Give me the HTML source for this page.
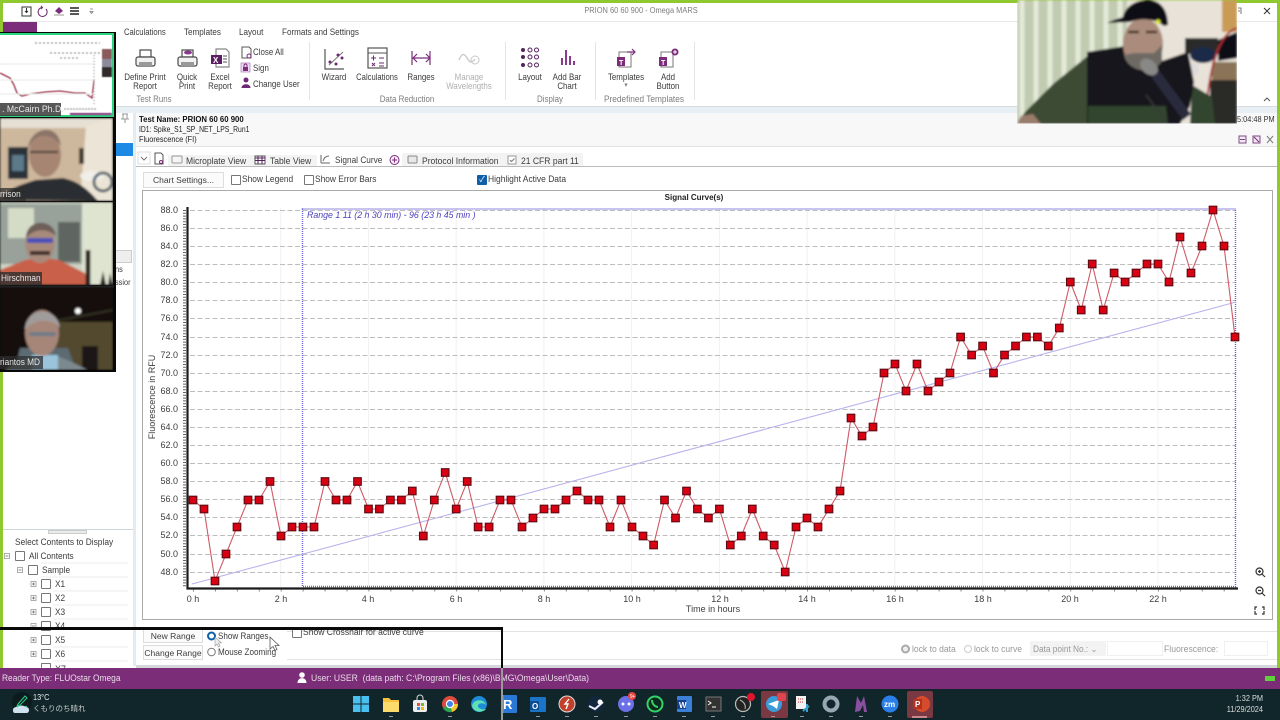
<!DOCTYPE html>
<html><head><meta charset="utf-8">
<style>
html,body{margin:0;padding:0;background:#fff;overflow:hidden}
#p{--s:.92;position:relative;width:1280px;height:720px;overflow:hidden;background:#fff;font-family:"Liberation Sans","Noto Sans CJK JP",sans-serif;font-size:9px;color:#3c3c3c;filter:blur(.3px)}
.a{position:absolute}
.t{position:absolute;white-space:nowrap;line-height:10px;transform-origin:0 50%;transform:translateY(-5px) scaleX(var(--s))}
.c{position:absolute;white-space:nowrap;line-height:10px;transform:translate(-50%,-5px) scaleX(var(--s));text-align:center}
.r{position:absolute;white-space:nowrap;line-height:10px;transform-origin:100% 50%;transform:translate(-100%,-5px) scaleX(var(--s));text-align:right}
.k{--s:1}.rb{--s:.88}
.g{color:#7d7d7d}.l{color:#b0b0b0}
.cb{position:absolute;width:8px;height:8px;border:1px solid #777;background:#fff;border-radius:1px}
.btn{position:absolute;background:#fbfbfb;border:1px solid #ddd;text-align:center;color:#3c3c3c;line-height:14px;box-sizing:border-box;white-space:nowrap;overflow:hidden;font-size:8.500px}
svg{position:absolute;left:0;top:0}
</style></head><body><div id="p">

<!-- frame and backgrounds -->
<div class="a" style="left:0;top:0;width:1280px;height:3px;background:#8fc92f"></div>
<div class="a" style="left:0;top:0;width:3px;height:689px;background:#8fc92f"></div>
<div class="a" style="left:1277px;top:0;width:3px;height:689px;background:#8fc92f"></div>
<div class="a" style="left:3px;top:21px;width:1274px;height:1px;background:#e8e8e8"></div>
<div class="a" style="left:3px;top:22px;width:34px;height:12px;background:#7b2d7b"></div>
<div class="a" style="left:3px;top:106px;width:1274px;height:7px;background:#e9f0f5;border-top:1px solid #d8dde0;box-sizing:border-box"></div>
<div class="a" style="left:133px;top:113px;width:1144px;height:33px;background:#f8f8f8;border-bottom:1px solid #e3e3e3"></div>
<div class="a" style="left:133px;top:113px;width:3px;height:553px;background:#e4ebf0"></div>
<div class="a" style="left:115px;top:143px;width:18px;height:13px;background:#1e88e5"></div>
<div class="a" style="left:115px;top:250px;width:17px;height:13px;background:#eee;border:1px solid #ccc;box-sizing:border-box"></div>
<div class="a" style="left:3px;top:529px;width:130px;height:1px;background:#cfd6da"></div>
<div class="a" style="left:48px;top:530px;width:39px;height:4px;background:#eaeaea;border:1px solid #ccc;box-sizing:border-box"></div>
<div class="a" style="left:136px;top:166px;width:1141px;height:1px;background:#bbb"></div>
<div class="a" style="left:142px;top:190px;width:1131px;height:430px;border:1px solid #aaa;box-sizing:border-box;background:#fff"></div>
<div class="a" style="left:287px;top:631px;width:990px;height:1px;background:#e2e2e2"></div>
<div class="a" style="left:287px;top:659px;width:990px;height:1px;background:#e2e2e2"></div>
<div class="a" style="left:136px;top:665px;width:1141px;height:3px;background:#d5d8da"></div>
<div class="a" style="left:0;top:668px;width:1280px;height:21px;background:#7b2d77"></div>
<div class="a" style="left:0;top:689px;width:1280px;height:31px;background:#10262a"></div>
<div class="a" style="left:1265px;top:676px;width:10px;height:5px;background:#5fd13c"></div>

<!-- ribbon group separators -->
<div class="a" style="left:309px;top:42px;width:1px;height:58px;background:#e4e4e4"></div>
<div class="a" style="left:505px;top:42px;width:1px;height:58px;background:#e4e4e4"></div>
<div class="a" style="left:595px;top:42px;width:1px;height:58px;background:#e4e4e4"></div>
<div class="a" style="left:694px;top:42px;width:1px;height:58px;background:#e4e4e4"></div>

<!-- icons & chart SVG -->
<svg width="1280" height="720" viewBox="0 0 1280 720">
<defs>
<marker id="m" markerUnits="userSpaceOnUse" markerWidth="11" markerHeight="11" refX="5.500" refY="5.500" viewBox="0 0 11 11"><rect x="1.700" y="1.700" width="7.600" height="7.600" fill="#d90012" stroke="#5a0a12" stroke-width="1.100"/></marker>
</defs>

<!-- QAT -->
<g fill="none" stroke="#333" stroke-width="1">
<rect x="22" y="7" width="9" height="9"/><path d="M26.500 8v4M25 11l1.500 1.500L28 11"/>
<path d="M46 9a4.500 4.500 0 1 1-4-1.500" stroke="#6d2a72"/><path d="M41 6l1.500 1.500L41 9" stroke="#6d2a72"/>
<path d="M55 11l4-4 4 4-4 3z" fill="#7b2d7b" stroke="none"/><path d="M54 15h10" stroke="#999"/>
<path d="M70 8h9M70 11h9M70 14h9" stroke="#222" stroke-width="1.600"/>
<path d="M90 11.500h3l-1.500 2z M90 9h3" stroke="#777" stroke-width=".8"/>
</g>
<!-- window buttons -->
<path d="M1264 8l6 6M1270 8l-6 6" stroke="#333" stroke-width="1" fill="none"/>
<path d="M1238 8h3v6M1238 11h2" stroke="#555" stroke-width=".8" fill="none"/>
<path d="M1264 101l3-3 3 3" stroke="#555" fill="none"/>

<!-- ribbon icons -->
<g fill="none" stroke="#4a4a4a" stroke-width="1.200">
<rect x="140" y="50" width="11" height="7" fill="#fff"/><rect x="136" y="57" width="19" height="9" rx="2" fill="#f2f2f2"/><rect x="139" y="62" width="13" height="4" fill="#999" stroke="none"/>
<rect x="182" y="50" width="11" height="7" fill="#fff"/><rect x="178" y="57" width="19" height="9" rx="2" fill="#f2f2f2"/><rect x="181" y="62" width="13" height="4" fill="#999" stroke="none"/><ellipse cx="188" cy="52.500" rx="4" ry="2" fill="#8a3b90" stroke="none"/>
<path d="M216 49h10l3 3v15h-13z" fill="#fff" stroke="#888"/>
</g>
<rect x="211" y="55" width="11" height="9" fill="#5b1e63"/><text x="213" y="63" font-size="8" font-weight="bold" fill="#fff" font-family="Liberation Sans">X</text>
<path d="M223 56h4M223 59h4M223 62h4" stroke="#555" fill="none"/>
<path d="M242 47h7l2 2v9h-9z" fill="#fff" stroke="#555"/><circle cx="249" cy="56" r="2" fill="#fff" stroke="#7b2d7b"/>
<rect x="241" y="63" width="9" height="9" fill="#efdcf1" stroke="#b07ab8" stroke-width=".7"/><rect x="243" y="67" width="5" height="4" fill="#7b2d7b"/><path d="M244 67v-1.500a1.500 1.500 0 0 1 3 0V67" fill="none" stroke="#7b2d7b"/>
<circle cx="246" cy="80" r="2.500" fill="#6d2a72"/><path d="M241.500 88c0-5 9-5 9 0z" fill="#6d2a72"/>
<path d="M325 49v20h19" fill="none" stroke="#555" stroke-width="1.200"/><path d="M329 65l14-13" stroke="#777" stroke-width="1" fill="none"/><g fill="#6d2a72"><circle cx="330" cy="62" r="1.500"/><circle cx="336" cy="64" r="1.500"/><circle cx="338" cy="55" r="1.500"/><circle cx="342" cy="58" r="1.500"/></g>
<rect x="368" y="48" width="19" height="20" fill="#fff" stroke="#555" stroke-width="1.200"/><path d="M368 53h19" stroke="#555"/><path d="M371 58h5M373.500 55.500v5M379 58h5M372 63l3 3M375 63l-3 3M379 63h5M379 66h5" stroke="#6d2a72" fill="none"/>
<path d="M413 58h17M417 54l-4 4 4 4M426 54l4 4-4 4M412 51v14M430 51v14" stroke="#7b2d7b" stroke-width="1.200" fill="none"/>
<path d="M459 60c3-7 5-7 8-2s5 5 8 1" stroke="#c9c9c9" stroke-width="1.400" fill="none"/><circle cx="475" cy="60" r="4" fill="none" stroke="#c9c9c9"/>
<g><circle cx="523" cy="50" r="2" fill="#54245c"/><circle cx="530" cy="50" r="2" fill="none" stroke="#54245c"/><circle cx="536.500" cy="50" r="2" fill="none" stroke="#54245c"/><circle cx="523" cy="57" r="2" fill="#54245c"/><circle cx="530" cy="57" r="2" fill="none" stroke="#54245c"/><circle cx="536.500" cy="57" r="2" fill="none" stroke="#54245c"/><circle cx="523" cy="65" r="2" fill="#54245c"/><circle cx="530" cy="65" r="2" fill="none" stroke="#54245c"/><circle cx="536.500" cy="65" r="2" fill="none" stroke="#54245c"/></g>
<g fill="#8a3b90"><rect x="561" y="58" width="2" height="7"/><rect x="565" y="50" width="2" height="15"/><rect x="569" y="56" width="2" height="9"/><rect x="573" y="61" width="2" height="4"/></g>
<path d="M619 52h12v15h-12z" fill="#fff" stroke="#777"/><rect x="617" y="57" width="8" height="9" fill="#7b2d7b"/><text x="619" y="65" font-size="7" font-weight="bold" fill="#fff" font-family="Liberation Sans">T</text><path d="M627 52h8M632 49l3 3-3 3" stroke="#7b2d7b" fill="none" stroke-width="1.200"/>
<path d="M661 52h12v15h-12z" fill="#fff" stroke="#777"/><rect x="659" y="57" width="8" height="9" fill="#7b2d7b"/><text x="661" y="65" font-size="7" font-weight="bold" fill="#fff" font-family="Liberation Sans">T</text><circle cx="675" cy="52" r="3.500" fill="#7b2d7b"/><path d="M673 52h4M675 50v4" stroke="#fff"/>

<!-- pin -->
<path d="M122 114h6M123 114v5h4v-5M121 119h8M125 119v4" stroke="#999" fill="none"/>
<!-- header right icons -->
<rect x="1239" y="136" width="7" height="7" fill="#f2e9f3" stroke="#7b4a80"/><path d="M1240 139.500h5" stroke="#7b4a80"/>
<rect x="1253" y="136" width="7" height="7" fill="#f2e9f3" stroke="#7b4a80"/><path d="M1254 137l5 5" stroke="#7b2d7b"/>
<path d="M1267 136l6 7M1273 136l-6 7" stroke="#777" fill="none"/>

<!-- tab strip -->
<rect x="138" y="152" width="12" height="12" fill="#fff" stroke="#ddd"/><path d="M141 157l3 3 3-3" stroke="#777" fill="none"/>
<path d="M155 153h6l2 2v9h-8z" fill="#fff" stroke="#555"/><circle cx="161" cy="162" r="1.500" fill="#fff" stroke="#7b2d7b"/>
<rect x="168" y="155" width="149" height="11" fill="#f3f3f3"/>
<rect x="172" y="156" width="10" height="7" rx="1" fill="#f5f5f5" stroke="#999"/>
<rect x="255" y="156" width="10" height="8" fill="#fff" stroke="#555"/><path d="M255 158h10M255 160.500h10M258 156v8M262 156v8" stroke="#54245c"/>
<path d="M321 163v-8M321 163h9M323 161c1-3 3-5 6-5" stroke="#666" fill="none"/>
<circle cx="394.500" cy="160" r="4.500" fill="#f6eef7" stroke="#7b2d7b"/><path d="M392 160h5M394.500 157.500v5" stroke="#7b2d7b"/>
<rect x="402" y="153" width="181" height="13" fill="#f3f3f3"/>
<rect x="408" y="156" width="9" height="7" rx="1" fill="#e8e8e8" stroke="#888"/>
<rect x="508" y="156" width="8" height="8" fill="#fff" stroke="#999"/><path d="M510 160l1.500 1.500 3-3" stroke="#777" fill="none"/>

<!-- chart gridlines -->
<g stroke="#f1f1f1" stroke-width="1">
<path d="M280.700 208V587M368.500 208V587M456.200 208V587M543.900 208V587M631.600 208V587M719.400 208V587M807.100 208V587M894.800 208V587M982.500 208V587M1070.300 208V587M1158 208V587"/>
</g>
<g stroke="#bdbdbd" stroke-width="1" stroke-dasharray="5 2.500" fill="none">
<path d="M190 210.500H1236M190 228.500H1236M190 246.500H1236M190 264.500H1236M190 282.500H1236M190 300.500H1236M190 318.500H1236M190 337.500H1236M190 355.500H1236M190 373.500H1236M190 391.500H1236M190 409.500H1236M190 427.500H1236M190 445.500H1236M190 463.500H1236M190 481.500H1236M190 499.500H1236M190 517.500H1236M190 535.500H1236M190 554.500H1236M190 572.500H1236"/>
</g>
<!-- range box -->
<path d="M302.500 209H1235.500V586.500H302.500Z" fill="none" stroke="#6a62d8" stroke-width="1.400" stroke-dasharray="1 1"/>
<!-- regression -->
<path d="M192 584L1236 302" stroke="#b8b3ec" stroke-width="1.100" fill="none"/>
<!-- axes -->
<path d="M187.500 207V588.500H1238" stroke="#1b1b1b" stroke-width="2.200" fill="none"/>
<path d="M184.500 210V588" stroke="#666" stroke-width="3" stroke-dasharray="1 1.800" fill="none"/>
<path d="M193 590.500H1238" stroke="#888" stroke-width="2" stroke-dasharray="1 20.930" fill="none"/>
<!-- data -->
<polyline fill="none" stroke="#cf5a66" stroke-width="1.100" marker-start="url(#m)" marker-mid="url(#m)" marker-end="url(#m)" points="193,500 204,509 215,581 226,554 237,527 248,500 259,500 270,481.500 281,536 292,527 303,527 314,527 325,481.500 336,500 347,500 357.500,481.500 368.500,509 379.400,509 390.400,500 401.400,500 412.300,491 423.300,536 434.300,500 445.200,472.500 456.200,509 467.200,481.500 478.100,527 489.100,527 500,500 511,500 522,527 533,518 544,509 555,509 566,500 577,491 588,500 599,500 610,527 621,500 632,527 643,536 653.600,545 664.500,500 675.500,518 686.500,491 697.400,509 708.400,518 719.400,509 730.300,545 741.300,536 752.300,509 763.200,536 774.200,545 785.200,572 796,527 807,518 818,527 829,509 840,491 851,418 862,436 873,427 884,373 895,364 906,391 917,364 928,391 939,382 950,373 960.600,337 971.600,355 982.600,346 993.500,373 1004.500,355 1015.500,346 1026.400,337 1037.400,337 1048.300,346 1059.300,328 1070.300,282 1081.200,310 1092.200,264 1103.200,310 1114.100,273 1125.100,282 1136,273 1147,264 1158,264 1169,282 1180,237 1191,273 1202,246 1213,210 1224,246 1235,337"/>

<!-- zoom icons -->
<g fill="none" stroke="#333" stroke-width="1.200">
<circle cx="1259.500" cy="571.500" r="3.500"/><path d="M1262 574l3 3M1258 571.500h3M1259.500 570v3"/>
<circle cx="1259.500" cy="590.500" r="3.500"/><path d="M1262 593l3 3M1258 590.500h3"/>
<path d="M1257 607h-2v3M1262 607h2v3M1257 614h-2v-3M1262 614h2v-3"/>
</g>

<!-- tree icons -->
<g fill="#fff" stroke="#999" stroke-width=".8">
<rect x="4.500" y="553.500" width="5" height="5"/><rect x="17.500" y="567.500" width="5" height="5"/>
<rect x="31" y="581.500" width="5" height="5"/><rect x="31" y="595.500" width="5" height="5"/><rect x="31" y="609.500" width="5" height="5"/><rect x="31" y="623.500" width="5" height="5"/><rect x="31" y="637.500" width="5" height="5"/><rect x="31" y="651.500" width="5" height="5"/>
</g>
<g stroke="#666" stroke-width=".7">
<path d="M5.500 556h3M18.500 570h3M32 584h3M33.500 582.500v3M32 598h3M33.500 596.500v3M32 612h3M33.500 610.500v3M32 626h3M32 640h3M33.500 638.500v3M32 654h3M33.500 652.500v3"/>
</g>
<g stroke="#eee"><path d="M41 563H128M41 577H128M53 591H128M53 605H128M53 619H128M53 647H128M53 661H128"/></g>

<!-- radios -->
<circle cx="211.500" cy="636" r="3.500" fill="#fff" stroke="#0c5fa8" stroke-width="2"/>
<circle cx="211.500" cy="652" r="3.800" fill="#fff" stroke="#777"/>
<circle cx="905.500" cy="649" r="3.500" fill="#eee" stroke="#aaa" stroke-width="2"/>
<circle cx="968" cy="649" r="3.500" fill="#fff" stroke="#ccc"/>
<!-- user icon in status -->
<circle cx="302" cy="675" r="2.800" fill="#fff"/><path d="M297.500 683c0-6.500 9-6.500 9 0z" fill="#fff"/>

<!-- taskbar icons -->
<g>
<path d="M353 696h7.500v7.500H353zM361.500 696h7.500v7.500h-7.500zM353 704.500h7.500v7.500H353zM361.500 704.500h7.500v7.500h-7.500z" fill="#49c0f0"/>
<path d="M383 698h6l2 2h8v12h-16z" fill="#f5c33b"/><rect x="383" y="702" width="16" height="10" fill="#fbdb6c"/>
<rect x="413" y="700" width="14" height="12" rx="2" fill="#eee"/><path d="M417 700v-2a3 3 0 0 1 6 0v2" fill="none" stroke="#ddd"/><rect x="417" y="703" width="3" height="3" fill="#e8502e"/><rect x="421" y="703" width="3" height="3" fill="#7ab830"/><rect x="417" y="707" width="3" height="3" fill="#2d8be0"/><rect x="421" y="707" width="3" height="3" fill="#f5b90a"/>
<circle cx="450" cy="704" r="8" fill="#dd4b3c"/><path d="M450 704L443 708A8 8 0 0 0 452 712Z" fill="#2fa44f"/><path d="M450 704L458 704A8 8 0 0 1 452 712Z" fill="#f7c52e"/><circle cx="450" cy="704" r="3.600" fill="#3f86ea" stroke="#fff" stroke-width="1.200"/>
<circle cx="479" cy="704" r="8" fill="#1d8bd6"/><path d="M472 706c1-7 12-8 14-1-3-3-8-2-8 1 0 3 5 4 8 3-3 4-12 4-14-3z" fill="#5fe0b4"/>
<rect x="501" y="695" width="16" height="18" rx="1" fill="#2a78d6"/><text x="503" y="709" font-size="13" font-weight="bold" fill="#fff" font-family="Liberation Sans">R</text>
<path d="M503 695v18" stroke="#b57b44" stroke-width="1.500"/>
<rect x="530" y="697" width="16" height="15" rx="1" fill="#1a74c8"/><rect x="530" y="701" width="9" height="9" fill="#0b4c94"/><text x="532" y="709" font-size="8" font-weight="bold" fill="#fff" font-family="Liberation Sans">O</text>
<circle cx="567" cy="704" r="8" fill="#c23f2c" stroke="#ddd" stroke-width="1"/><path d="M569 699l-4 5h3l-2 5" stroke="#fff" fill="none" stroke-width="1.400"/>
<circle cx="596" cy="704" r="8" fill="#12263c"/><path d="M589 706l6 3 8-7" stroke="#eef" stroke-width="2" fill="none"/><circle cx="600" cy="702" r="2.500" fill="#fff"/>
<circle cx="626" cy="704" r="8" fill="#6b70e8"/><circle cx="623" cy="704" r="1.500" fill="#fff"/><circle cx="629" cy="704" r="1.500" fill="#fff"/><circle cx="632" cy="696" r="4" fill="#e8453c"/>
<circle cx="655" cy="704" r="7.500" fill="#0c2a1d" stroke="#35d366" stroke-width="2"/><path d="M652 700c0 4 3 7 6 7" stroke="#35d366" stroke-width="2" fill="none"/>
<rect x="677" y="696" width="15" height="16" rx="1" fill="#3c7fd6"/><rect x="677" y="700" width="9" height="9" fill="#163f90"/><text x="679" y="708" font-size="8" font-weight="bold" fill="#fff" font-family="Liberation Sans">W</text>
<rect x="706" y="697" width="15" height="14" fill="#333" stroke="#777"/><path d="M708 701l3 2-3 2M712 707h4" stroke="#fff" fill="none"/>
<circle cx="743" cy="704" r="7.500" fill="#222" stroke="#bbb" stroke-width="1.200"/><circle cx="751" cy="697" r="4" fill="#e0142c"/><path d="M740 700c4 2 6 5 5 9" stroke="#bbb" fill="none"/>
<rect x="761" y="691" width="27" height="27" rx="2" fill="#7a3842"/>
<circle cx="774" cy="704" r="8" fill="#3a9bd8"/><path d="M768 704l11-4-2 9-4-3z" fill="#fff"/><rect x="777" y="693" width="9" height="8" rx="2" fill="#e0444c"/>
<rect x="796" y="696" width="10" height="13" fill="#f2f2f2"/><path d="M798 699h6M798 702h6" stroke="#c33" stroke-dasharray="1 1"/><path d="M807 704v8M803 711l6-5" stroke="#3aa0c8" stroke-width="2"/>
<circle cx="831" cy="704" r="6.500" fill="none" stroke="#97a8b4" stroke-width="4"/>
<path d="M855 712l2-16 4 7 3-7 3 16-3 0-1-7-3 6z" fill="#8a4fa0"/>
<circle cx="890" cy="704" r="8.500" fill="#2b7ee8"/><text x="884" y="707" font-size="8" font-weight="bold" fill="#fff" font-family="Liberation Sans">zm</text>
<rect x="907" y="691" width="26" height="27" rx="2" fill="#7a3842"/>
<circle cx="922" cy="704" r="8" fill="#d84a2c"/><rect x="913" y="699" width="9" height="10" fill="#b3321d"/><text x="915" y="707" font-size="8" font-weight="bold" fill="#fff" font-family="Liberation Sans">P</text>
<path d="M912 717h15" stroke="#e8a0a8" stroke-width="1.500"/>
<g fill="#999"><rect x="389" y="716" width="4" height="1"/><rect x="448" y="716" width="4" height="1"/><rect x="536" y="716" width="4" height="1"/><rect x="565" y="716" width="4" height="1"/><rect x="594" y="716" width="4" height="1"/><rect x="624" y="716" width="4" height="1"/><rect x="653" y="716" width="4" height="1"/><rect x="682" y="716" width="4" height="1"/><rect x="711" y="716" width="4" height="1"/><rect x="741" y="716" width="4" height="1"/><rect x="771" y="716" width="4" height="1"/><rect x="800" y="716" width="4" height="1"/><rect x="829" y="716" width="4" height="1"/><rect x="859" y="716" width="4" height="1"/><rect x="888" y="716" width="4" height="1"/></g>
<!-- weather -->
<circle cx="22" cy="702" r="10" fill="#0b1b1e"/>
<path d="M18 704l7-8 2 2-7 7-3 1zM17 706.500h10" stroke="#2ed08a" fill="none" stroke-width="1"/>
<path d="M13 710c0-3 3-3 5-3 1-2 6-2 7 0 3 0 4 1 4 3s-1 3-3 3H15c-2 0-2-2-2-3z" fill="#cfe0ee"/>
</svg>

<!-- title / tabs text -->
<div class="c g" style="left:641px;top:11px;font-size:8px;--s:.93">PRION 60 60 900 - Omega MARS</div>
<div class="t" style="left:124px;top:32px;--s:.85">Calculations</div>
<div class="t" style="left:184px;top:32px;--s:.9">Templates</div>
<div class="t" style="left:239px;top:32px;--s:.9">Layout</div>
<div class="t" style="left:282px;top:32px;--s:.9">Formats and Settings</div>

<div class="c rb" style="left:145px;top:77px">Define Print</div><div class="c rb" style="left:145px;top:86px">Report</div>
<div class="c rb" style="left:187px;top:77px">Quick</div><div class="c rb" style="left:187px;top:86px">Print</div>
<div class="c rb" style="left:220px;top:77px">Excel</div><div class="c rb" style="left:220px;top:86px">Report</div>
<div class="t rb" style="left:253px;top:52px">Close All</div>
<div class="t rb" style="left:253px;top:68px">Sign</div>
<div class="t rb" style="left:253px;top:84px">Change User</div>
<div class="c g rb" style="left:154px;top:99px">Test Runs</div>
<div class="c rb" style="left:334px;top:77px">Wizard</div>
<div class="c" style="left:377px;top:77px;--s:.85">Calculations</div>
<div class="c rb" style="left:421px;top:77px">Ranges</div>
<div class="c l rb" style="left:469px;top:77px">Manage</div><div class="c l rb" style="left:469px;top:86px">Wavelengths</div>
<div class="c g rb" style="left:407px;top:99px">Data Reduction</div>
<div class="c rb" style="left:530px;top:77px">Layout</div>
<div class="c rb" style="left:567px;top:77px">Add Bar</div><div class="c rb" style="left:567px;top:86px">Chart</div>
<div class="c g rb" style="left:550px;top:99px">Display</div>
<div class="c rb" style="left:626px;top:77px">Templates</div>
<div class="c rb" style="left:668px;top:77px">Add</div><div class="c rb" style="left:668px;top:86px">Button</div>
<div class="c g" style="left:626px;top:86px;font-size:7px">▾</div>
<div class="c g" style="left:644px;top:99px">Predefined Templates</div>

<!-- test info -->
<div class="t" style="left:139px;top:120px;font-weight:bold;font-size:8px;color:#111;--s:.97">Test Name: PRION 60 60 900</div>
<div class="t" style="left:139px;top:130px;font-size:8px;color:#222;--s:.85">ID1: Spike_S1_SP_NET_LPS_Run1</div>
<div class="t" style="left:139px;top:140px;font-size:8px;color:#222">Fluorescence (FI)</div>
<div class="t" style="left:1237px;top:120px;font-size:8px;color:#333">5:04:48 PM</div>

<!-- tabs -->
<div class="t" style="left:186px;top:161px;--s:.95">Microplate View</div>
<div class="t" style="left:270px;top:161px;--s:.95">Table View</div>
<div class="t" style="left:335px;top:160px">Signal Curve</div>
<div class="t" style="left:422px;top:161px;--s:.95">Protocol Information</div>
<div class="t" style="left:521px;top:161px;--s:.95">21 CFR part 11</div>

<!-- options -->
<div class="btn" style="left:143px;top:172px;width:81px;height:16px">Chart Settings...</div>
<div class="cb" style="left:231px;top:175px"></div><div class="t" style="left:242px;top:179px;--s:.93">Show Legend</div>
<div class="cb" style="left:304px;top:175px"></div><div class="t" style="left:315px;top:179px;--s:.93">Show Error Bars</div>
<div class="cb" style="left:477px;top:175px;background:#0c5fa8;border-color:#0c5fa8;color:#fff;font-size:8px;line-height:8px;text-align:center">✓</div><div class="t" style="left:488px;top:179px;--s:.94">Highlight Active Data</div>

<!-- chart labels -->
<div class="c k" style="left:694px;top:198px;font-weight:bold;font-size:8px;color:#222">Signal Curve(s)</div>
<div class="t k" style="left:307px;top:215px;color:#4a3fc0;font-style:italic;font-size:8.800px">Range 1 11 (2 h 30 min) - 96 (23 h 45 min )</div>
<div class="k">
<div class="r" style="left:178px;top:210px">88.0</div><div class="r" style="left:178px;top:228px">86.0</div><div class="r" style="left:178px;top:246px">84.0</div><div class="r" style="left:178px;top:264px">82.0</div><div class="r" style="left:178px;top:282px">80.0</div><div class="r" style="left:178px;top:300px">78.0</div><div class="r" style="left:178px;top:318px">76.0</div><div class="r" style="left:178px;top:337px">74.0</div><div class="r" style="left:178px;top:355px">72.0</div><div class="r" style="left:178px;top:373px">70.0</div><div class="r" style="left:178px;top:391px">68.0</div><div class="r" style="left:178px;top:409px">66.0</div><div class="r" style="left:178px;top:427px">64.0</div><div class="r" style="left:178px;top:445px">62.0</div><div class="r" style="left:178px;top:463px">60.0</div><div class="r" style="left:178px;top:481px">58.0</div><div class="r" style="left:178px;top:499px">56.0</div><div class="r" style="left:178px;top:517px">54.0</div><div class="r" style="left:178px;top:535px">52.0</div><div class="r" style="left:178px;top:554px">50.0</div><div class="r" style="left:178px;top:572px">48.0</div>
<div class="c" style="left:152px;top:397px;transform:translate(-50%,-5px) rotate(-90deg)">Fluorescence in RFU</div>
<div class="c" style="left:193px;top:599px">0 h</div><div class="c" style="left:281px;top:599px">2 h</div><div class="c" style="left:368px;top:599px">4 h</div><div class="c" style="left:456px;top:599px">6 h</div><div class="c" style="left:544px;top:599px">8 h</div><div class="c" style="left:632px;top:599px">10 h</div><div class="c" style="left:720px;top:599px">12 h</div><div class="c" style="left:807px;top:599px">14 h</div><div class="c" style="left:895px;top:599px">16 h</div><div class="c" style="left:983px;top:599px">18 h</div><div class="c" style="left:1070px;top:599px">20 h</div><div class="c" style="left:1158px;top:599px">22 h</div>
<div class="c" style="left:713px;top:609px">Time in hours</div>
</div>

<!-- left tree -->
<div class="t" style="left:15px;top:542px;--s:.93">Select Contents to Display</div>
<div class="cb" style="left:15px;top:551px"></div><div class="t" style="left:29px;top:556px">All Contents</div>
<div class="cb" style="left:28px;top:565px"></div><div class="t" style="left:42px;top:570px">Sample</div>
<div class="cb" style="left:41px;top:579px"></div><div class="t" style="left:55px;top:584px">X1</div>
<div class="cb" style="left:41px;top:593px"></div><div class="t" style="left:55px;top:598px">X2</div>
<div class="cb" style="left:41px;top:607px"></div><div class="t" style="left:55px;top:612px">X3</div>
<div class="cb" style="left:41px;top:621px"></div><div class="t" style="left:55px;top:626px">X4</div>
<div class="cb" style="left:41px;top:635px"></div><div class="t" style="left:55px;top:640px">X5</div>
<div class="cb" style="left:41px;top:649px"></div><div class="t" style="left:55px;top:654px">X6</div>
<div class="cb" style="left:41px;top:663px;height:4px;border-bottom:0"></div><div class="a" style="left:55px;top:664px;height:4px;overflow:hidden;line-height:10px">X7</div>
<div class="t" style="left:115px;top:270px;font-size:8px">ns</div>
<div class="t" style="left:115px;top:283px;font-size:8px">ssior</div>

<!-- bottom controls -->
<div class="btn" style="left:143px;top:628px;width:60px;height:15px">New Range</div>
<div class="btn" style="left:143px;top:645px;width:60px;height:15px">Change Range</div>
<div class="t" style="left:218px;top:636px;--s:.9">Show Ranges</div>
<div class="t" style="left:218px;top:652px;--s:.9">Mouse Zooming</div>
<div class="cb" style="left:292px;top:628px"></div><div class="t" style="left:303px;top:632px;--s:.95">Show Crosshair for active curve</div>
<div class="t" style="left:912px;top:649px;color:#999;--s:.95">lock to data</div>
<div class="t" style="left:974px;top:649px;color:#999;--s:.95">lock to curve</div>
<div class="a" style="left:1030px;top:641px;width:76px;height:15px;background:#f3f3f3"></div>
<div class="t" style="left:1033px;top:649px;color:#999">Data point No.:  ⌄</div>
<div class="a" style="left:1107px;top:641px;width:56px;height:15px;border:1px solid #f0f0f0;box-sizing:border-box"></div>
<div class="t" style="left:1164px;top:649px;color:#999;--s:.96">Fluorescence:</div>
<div class="a" style="left:1224px;top:641px;width:44px;height:15px;border:1px solid #f0f0f0;box-sizing:border-box"></div>

<!-- cursor -->
<svg width="1280" height="720" viewBox="0 0 1280 720"><path d="M270 637v12l3-2.500 2 4 2-1-2-4h4z" fill="#fff" stroke="#555" stroke-width=".8"/><path d="M215 637v9l2-2 1.500 3 1.500-1-1.500-3h3z" fill="#eee" stroke="#999" stroke-width=".6"/></svg>

<!-- status/task text -->
<div class="t" style="left:2px;top:678px;color:#e9dbe9;--s:.93">Reader Type: FLUOstar Omega</div>
<div class="t" style="left:311px;top:678px;color:#e9dbe9;--s:.955">User: USER&nbsp; (data path: C:\Program Files (x86)\BMG\Omega\User\Data)</div>
<div class="t" style="left:33px;top:698px;color:#eee;font-size:8px">13°C</div>
<div class="t" style="left:33px;top:709px;color:#ccc;font-size:7.500px;--s:1">くもりのち晴れ</div>
<div class="r" style="left:1263px;top:699px;color:#ddd;font-size:8px">1:32 PM</div>
<div class="r" style="left:1263px;top:710px;color:#ddd;font-size:8px">11/29/2024</div>
<div class="t" style="left:630px;top:697px;color:#fff;font-size:5px">9+</div>

<!-- black annotation rectangle -->
<div class="a" style="left:0;top:627px;width:503px;height:3px;background:#0a0a0a"></div>
<div class="a" style="left:501px;top:627px;width:2px;height:41px;background:#0a0a0a"></div>
<div class="a" style="left:501px;top:668px;width:2px;height:52px;background:#9a9a9a"></div>

<!-- video column -->
<svg width="1280" height="720" viewBox="0 0 1280 720">
<defs>
<filter id="b" x="-10%" y="-10%" width="120%" height="120%"><feGaussianBlur stdDeviation="1.100"/></filter>
<filter id="b2" x="-10%" y="-10%" width="120%" height="120%"><feGaussianBlur stdDeviation=".5"/></filter>
<clipPath id="c1"><rect x="0" y="118" width="113" height="83"/></clipPath>
<clipPath id="c2"><rect x="0" y="202" width="113" height="83"/></clipPath>
<clipPath id="c3"><rect x="0" y="287" width="113" height="83"/></clipPath>
<clipPath id="wc"><rect x="1017" y="0" width="220" height="123.500"/></clipPath>
</defs>
<rect x="0" y="32" width="116" height="340" fill="#080808"/>
<!-- share -->
<rect x="0" y="33" width="114" height="84" fill="#2bd67f"/>
<rect x="0" y="35" width="112" height="80" fill="#fff"/>
<g filter="url(#b2)">
<path d="M0 73l10 5 4 7 3 8 5 3 8-2 15-2 15-1 15 2 10 0 7 5 2-18" fill="none" stroke="#a0304a" stroke-width="1.300"/>
<path d="M35 43h65M50 53h50M60 58h20" stroke="#999" stroke-width="1.200" stroke-dasharray="2 2"/>
<path d="M0 64h95M0 80h95M0 94h95" stroke="#e8e8e8" stroke-width="1"/>
<rect x="102" y="49" width="10" height="10" fill="#8a5a5a"/><rect x="102" y="59" width="10" height="8" fill="#8a8a9a"/><rect x="102" y="67" width="10" height="10" fill="#332a2a"/>
<path d="M94 55v50" stroke="#aaa" stroke-width="1.500" stroke-dasharray="1 2"/>
<path d="M64 109h32" stroke="#aaa" stroke-width="1.500" stroke-dasharray="2 1"/>
<rect x="70" y="113" width="42" height="2" fill="#7b2d77"/>
</g>
<rect x="0" y="103" width="61" height="13" fill="#3a3a3a" opacity=".85"/>
<!-- p2 -->
<g clip-path="url(#c1)"><g filter="url(#b)">
<rect x="0" y="118" width="113" height="83" fill="#cdb79d"/>
<rect x="0" y="118" width="113" height="10" fill="#e6e0d4"/>
<path d="M86 126L113 118V201H80z" fill="#ece4d6"/>
<rect x="8" y="147" width="20" height="32" fill="#2b3238"/><rect x="12" y="155" width="12" height="16" fill="#5b7a8a"/>
<rect x="79" y="148" width="5" height="16" fill="#453a2e"/>
<ellipse cx="92" cy="176" rx="12" ry="5" fill="#f0efe9"/>
<circle cx="103" cy="182" r="9" fill="none" stroke="#5a6670" stroke-width="3"/>
<path d="M0 200c10-14 25-16 35-20l28-2c14 3 24 10 35 23z" fill="#2a2d30"/>
<ellipse cx="45" cy="155" rx="16" ry="22" fill="#a68672"/>
<path d="M28 150c0-22 30-30 33-4-6-8-10-10-17-10-8 0-12 4-16 14z" fill="#8a7468"/>
<path d="M30 152h28" stroke="#3a3030" stroke-width="2"/>
</g></g>
<!-- p3 -->
<g clip-path="url(#c2)"><g filter="url(#b)">
<rect x="0" y="202" width="113" height="83" fill="#cdd4c4"/>
<rect x="0" y="204" width="82" height="60" fill="#98a29a"/>
<rect x="8" y="208" width="26" height="30" fill="#d4dcc8"/><rect x="58" y="222" width="22" height="40" fill="#5e6662"/>
<rect x="82" y="202" width="31" height="83" fill="#dfe4d0"/>
<path d="M0 285v-15l25-10 16-3 18 3 26 13 2 12z" fill="#c9604a"/>
<ellipse cx="40" cy="243" rx="15" ry="20" fill="#a88a7c"/>
<path d="M26 238c0-20 28-20 30-2-8-8-22-8-30 2z" fill="#6e5e58"/>
<rect x="27" y="238" width="26" height="5" rx="2" fill="#4a50b8"/>
<path d="M30 253h20" stroke="#3a2a28" stroke-width="4"/>
<path d="M88 285v-35" stroke="#2a241e" stroke-width="5"/>
<path d="M100 285l3-14 3 14zM108 285l2-12 3 12z" fill="#222"/>
</g></g>
<!-- p4 -->
<g clip-path="url(#c3)"><g filter="url(#b)">
<rect x="0" y="287" width="113" height="83" fill="#181010"/>
<rect x="55" y="322" width="58" height="48" fill="#52482f"/>
<path d="M50 322L113 310" stroke="#332" stroke-width="2"/>
<circle cx="78" cy="311" r="3" fill="#fff"/>
<rect x="82" y="346" width="16" height="24" fill="#1a1616"/>
<path d="M15 370l5-22h48l8 22z" fill="#5c6a72"/>
<path d="M5 370c12-8 18-12 27-14l25 0c8 3 20 8 30 14z" fill="#7c8a90"/>
<rect x="32" y="355" width="26" height="15" fill="#9ac4dc"/>
<ellipse cx="42" cy="333" rx="17" ry="23" fill="#a68678"/>
<path d="M25 330c0-24 33-24 35-2-8-10-26-10-35 2z" fill="#a09c9c"/>
<rect x="29" y="332" width="27" height="4" rx="2" fill="#6f7a88"/>
</g></g>
<rect x="0" y="201" width="114" height="1" fill="#111"/><rect x="0" y="285.500" width="114" height="2" fill="#222"/>
<rect x="0" y="272" width="42" height="13" fill="#2e2e2e" opacity=".8"/>
<rect x="0" y="188" width="26" height="13" fill="#2e2e2e" opacity=".75"/>
<rect x="0" y="356" width="43" height="13" fill="#2e2e2e" opacity=".75"/>

<!-- webcam -->
<g clip-path="url(#wc)"><g filter="url(#b)">
<rect x="1017" y="0" width="220" height="124" fill="#e8e2d8"/>
<rect x="1017" y="0" width="110" height="124" fill="#c0cbb0"/>
<path d="M1022 0v124M1036 0v124M1050 0v124M1064 0v124M1078 0v124M1092 0v124M1106 0v124M1120 0v50" stroke="#e4e9d8" stroke-width="5"/>
<rect x="1222" y="0" width="15" height="32" fill="#c99c56"/>
<rect x="1185" y="38" width="33" height="16" fill="#2a2a2a"/>
<rect x="1212" y="62" width="25" height="19" fill="#8b7358"/>
<rect x="1210" y="80" width="27" height="44" fill="#2a2b26"/>
<path d="M1218 40l19-8v26l-19 3z" fill="#101018"/>
<ellipse cx="1203" cy="55" rx="13" ry="8" fill="#1c2a48"/>
<path d="M1237 28c-18 6-28 36-32 96" stroke="#a82a30" stroke-width="2" fill="none"/>
<rect x="1186" y="64" width="12" height="10" fill="#ddd"/>
<path d="M1017 124l8-12 28-28 37-30 20 52 v18z" fill="#3c4c34"/>
<path d="M1192 85l20 12 3 27h-25z" fill="#33452f"/>
<path d="M1087 52l38-6 28 18 35-12 6 30 -4 24-10 18h-93z" fill="#12141a"/>
<path d="M1088 106h78l2 18h-80z" fill="#33452f"/>
<path d="M1017 124l4-8 12-2 8 10z" fill="#9a7c6c"/>
<ellipse cx="1143" cy="44" rx="20" ry="26" fill="#ab8c7b"/>
<path d="M1124 55c4 18 30 20 38 6l0-16-8 8h-20z" fill="#6e6a64"/>
<path d="M1128 32h11M1146 32h11" stroke="#3e2f28" stroke-width="2.500"/>
<path d="M1107 23c6-3 10-4 16-6 2-10 12-17 25-17 14 0 20 12 20 25l-4 1c-10-8-24-8-34-4z" fill="#0f1012"/>
<circle cx="1158" cy="22" r="2.500" fill="#d8e634"/>
<path d="M1154 72l33 45" stroke="#2c2c3c" stroke-width="10"/>
<ellipse cx="1149" cy="67" rx="10" ry="7" fill="#888886" transform="rotate(40 1149 67)"/>
<path d="M1146 95l22 29" stroke="#3a3a3a" stroke-width="1.500"/>
</g></g>
</svg>
<!-- name labels -->
<div class="t" style="left:2px;top:110px;color:#e8e8e8;font-size:9.500px">. McCairn Ph.D.</div>
<div class="t" style="left:0;top:194px;color:#e8e8e8">rrison</div>
<div class="t" style="left:1px;top:278px;color:#e8e8e8">Hirschman</div>
<div class="t" style="left:0;top:362px;color:#e8e8e8">riantos MD</div>

</div></body></html>
